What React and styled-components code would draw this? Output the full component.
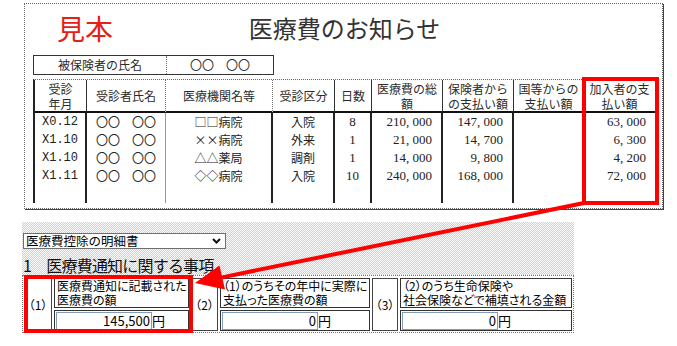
import React from 'react';
import styled, { createGlobalStyle } from 'styled-components';

const jp = '"Noto Sans CJK JP", "Noto Sans", sans-serif';
const serif = '"Liberation Serif", "Noto Sans CJK JP", serif';
const mono = '"Liberation Mono", "Noto Sans CJK JP", monospace';

const GlobalStyle = createGlobalStyle`
  body {
    margin: 0;
    background: #fff;
    font-family: ${jp};
    color: #000;
  }
`;

const Page = styled.div`
  position: relative;
  width: 677px;
  height: 346px;
  padding-top: 3px;
  box-sizing: border-box;
  overflow: hidden;
`;

/* ---- 医療費のお知らせ (sample notice) ---- */

const Notice = styled.div`
  box-sizing: border-box;
  width: 639px;
  height: 206px;
  margin-left: 24px;
  padding: 0 6px 0 8px;
  border: 1px dotted #666;
  box-shadow: 1px 1px 0 #444;
  color: #2b2b2b;
`;

const NoticeHead = styled.div`
  display: grid;
  grid-template-columns: 1fr auto 1fr;
  align-items: center;
  height: 48px;
  margin-bottom: 3px;
`;

const Stamp = styled.span`
  padding-left: 24px;
  font-size: 28px;
  line-height: 1;
  color: #e5201b;
`;

const Title = styled.h1`
  margin: 0;
  font-size: 24px;
  font-weight: 400;
  line-height: 1;
  color: #333;
`;

const NameTable = styled.div`
  display: grid;
  grid-template-columns: 133px 106px;
  width: 241px;
  height: 20px;
  box-sizing: border-box;
  border: 1px solid #333;
  font-size: 12px;
  line-height: 18px;
  text-align: center;
`;

const NameCell = styled.div`
  border-right: ${(p) => (p.$last ? 'none' : '1px dotted #777')};
  white-space: pre;
`;

const Table = styled.div`
  display: grid;
  grid-template-columns: 52px 79px 107px 62px 37px 71px 71px 70px 71px;
  width: 623px;
  margin-top: 4px;
  box-sizing: border-box;
  border-top: 1px dotted #666;
  border-left: 2px solid #222;
  border-right: 1px solid #333;
`;

const HeadCell = styled.div`
  display: flex;
  align-items: center;
  justify-content: center;
  height: 33px;
  box-sizing: border-box;
  border-bottom: 2px solid #111;
  border-right: ${(p) => (p.$soft ? '1px dotted #777' : p.$last ? 'none' : '1px solid #333')};
  font-size: 12px;
  line-height: 15px;
  text-align: center;
`;

const BodyCell = styled.div`
  height: 18px;
  box-sizing: border-box;
  border-right: ${(p) => (p.$soft ? '1px solid #9a9a9a' : p.$last ? 'none' : '2px solid #222')};
  font-family: ${(p) => (p.$font === 'mono' ? mono : p.$font === 'serif' ? serif : jp)};
  font-size: ${(p) => (p.$font === 'serif' ? '13px' : '12px')};
  line-height: 18px;
  text-align: ${(p) => p.$align};
  padding-right: ${(p) => (p.$align === 'right' ? '9px' : '0')};
  white-space: pre;
  color: #222;
`;

const columns = [
  { head: <>受診<br />年月</>, align: 'center', font: 'mono' },
  { head: '受診者氏名', align: 'center', font: 'jp', soft: true },
  { head: '医療機関名等', align: 'center', font: 'jp', soft: true },
  { head: '受診区分', align: 'center', font: 'jp' },
  { head: '日数', align: 'center', font: 'serif' },
  { head: <>医療費の総<br />額</>, align: 'right', font: 'serif' },
  { head: <>保険者から<br />の支払い額</>, align: 'right', font: 'serif' },
  { head: <>国等からの<br />支払い額</>, align: 'right', font: 'serif' },
  { head: <>加入者の支<br />払い額</>, align: 'right', font: 'serif', last: true },
];

const names = '〇〇　〇〇';

const rows = [
  ['X0.12', names, '□□病院', '入院', '8', '210, 000', '147, 000', '', '63, 000'],
  ['X1.10', names, '××病院', '外来', '1', '21, 000', '14, 700', '', '6, 300'],
  ['X1.10', names, '△△薬局', '調剤', '1', '14, 000', '9, 800', '', '4, 200'],
  ['X1.11', names, '◇◇病院', '入院', '10', '240, 000', '168, 000', '', '72, 000'],
  ['', '', '', '', '', '', '', '', ''],
];

/* ---- 医療費控除の明細書 form ---- */

const Panel = styled.section`
  width: 552px;
  margin: 13px 0 0 22px;
  padding-top: 11px;
  background: repeating-conic-gradient(#cdcdcd 0% 25%, #fff 0% 50%) 0 0 / 2px 2px;
`;

const SelectWrap = styled.div`
  position: relative;
  width: 203px;
  height: 16px;
  margin-left: 1px;
`;

const Select = styled.select`
  appearance: none;
  display: block;
  width: 100%;
  height: 16px;
  box-sizing: border-box;
  margin: 0;
  padding: 0 0 0 2px;
  border: 1px solid #6f6f6f;
  border-radius: 0;
  background: #fff;
  font-family: ${jp};
  font-size: 12.5px;
  line-height: 14px;
  color: #000;
`;

const Chevron = styled.svg`
  position: absolute;
  right: 5px;
  top: 5px;
  pointer-events: none;
`;

const Heading = styled.h2`
  margin: 6px 0 0 1px;
  font-size: 16px;
  font-weight: 400;
  letter-spacing: -0.8px;
  line-height: 20px;
  color: #111;
`;

const BoxTable = styled.div`
  display: flex;
  gap: 2px;
  padding: 2px 1px 1px;
  border: 1px dotted #7a7a7a;
  background: #fff;
  font-feature-settings: 'palt';
`;

const NumCell = styled.div`
  display: flex;
  align-items: center;
  justify-content: center;
  width: ${(p) => p.$w}px;
  height: 53px;
  box-sizing: border-box;
  border: 1px solid #444;
  font-size: 12px;
`;

const Entry = styled.div`
  display: flex;
  flex-direction: column;
  gap: 2px;
  width: ${(p) => p.$w}px;
`;

const LabelBox = styled.div`
  height: 30px;
  box-sizing: border-box;
  padding: 0 2px;
  border: 1px solid #333;
  font-size: 12px;
  line-height: 14px;
  white-space: nowrap;
  overflow: hidden;
`;

const InputBox = styled.div`
  display: flex;
  align-items: center;
  height: 21px;
  box-sizing: border-box;
  padding: 0 1px;
  border: 1px solid #333;
`;

const Field = styled.input`
  width: 96px;
  height: 18px;
  box-sizing: border-box;
  margin: 0;
  padding: 0 1px;
  border: 1px solid #7f9db9;
  font-family: ${jp};
  font-size: 13px;
  text-align: right;
  color: #000;
`;

const Yen = styled.span`
  font-size: 13px;
  line-height: 1;
`;

const entries = [
  { num: '（1）', numW: 28, w: 135, label: ['医療費通知に記載された', '医療費の額'], value: '145,500' },
  { num: '（2）', numW: 27, w: 150, label: ['（1）のうちその年中に実際に', '支払った医療費の額'], value: '0' },
  { num: '（3）', numW: 26, w: 172, label: ['（2）のうち生命保険や', '社会保険などで補填される金額'], value: '0' },
];

const Marks = styled.svg`
  position: absolute;
  left: 0;
  top: 0;
  pointer-events: none;
`;

export default function App() {
  return (
    <Page>
      <GlobalStyle />
      <Notice>
        <NoticeHead>
          <Stamp>見本</Stamp>
          <Title>医療費のお知らせ</Title>
          <span />
        </NoticeHead>
        <NameTable>
          <NameCell>被保険者の氏名</NameCell>
          <NameCell $last>〇〇　〇〇</NameCell>
        </NameTable>
        <Table>
          {columns.map((c, i) => (
            <HeadCell key={'h' + i} $soft={c.soft} $last={c.last}>{c.head}</HeadCell>
          ))}
          {rows.map((r, ri) =>
            r.map((v, ci) => (
              <BodyCell
                key={ri + '-' + ci}
                $align={columns[ci].align}
                $font={columns[ci].font}
                $soft={ci === 1}
                $last={columns[ci].last}
              >
                {v}
              </BodyCell>
            ))
          )}
        </Table>
      </Notice>

      <Panel>
        <SelectWrap>
          <Select defaultValue="a">
            <option value="a">医療費控除の明細書</option>
          </Select>
          <Chevron width="9" height="6" viewBox="0 0 9 6">
            <polyline points="1,1 4.5,4.5 8,1" fill="none" stroke="#111" strokeWidth="2" />
          </Chevron>
        </SelectWrap>
        <Heading>1　医療費通知に関する事項</Heading>
        <BoxTable>
          {entries.map((e) => (
            <React.Fragment key={e.num}>
              <NumCell $w={e.numW}>{e.num}</NumCell>
              <Entry $w={e.w}>
                <LabelBox>
                  {e.label[0]}
                  <br />
                  {e.label[1]}
                </LabelBox>
                <InputBox>
                  <Field readOnly value={e.value} />
                  <Yen>円</Yen>
                </InputBox>
              </Entry>
            </React.Fragment>
          ))}
        </BoxTable>
      </Panel>

      <Marks width="677" height="346" viewBox="0 0 677 346">
        <rect x="584" y="79" width="73" height="124" fill="none" stroke="#ff0000" strokeWidth="4" />
        <rect x="26" y="277" width="165" height="54" fill="none" stroke="#ff0000" strokeWidth="4" />
        <line x1="584" y1="203" x2="221" y2="277.6" stroke="#ff0000" strokeWidth="4" />
        <polygon points="195,283 225,289.5 219.5,265.5" fill="#ff0000" />
      </Marks>
    </Page>
  );
}
